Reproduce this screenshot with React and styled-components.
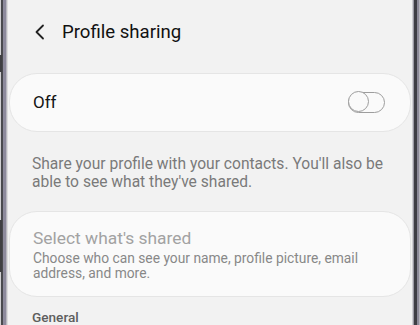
import React from 'react'
import styled, { createGlobalStyle } from 'styled-components'

const GlobalStyle = createGlobalStyle`
  html, body {
    margin: 0;
    padding: 0;
    background: #f2f2f2;
    font-family: Roboto, "Liberation Sans", sans-serif;
  }
`

const Phone = styled.div`
  display: flex;
  width: 420px;
  height: 325px;
  overflow: hidden;
`

const Bezel = styled.div`
  flex: 0 0 ${p => p.$w}px;
  background: ${p => p.$side === 'left'
    ? 'linear-gradient(90deg, #d0d0d2 0 1px, #4a4a4e 1px 3px, #8d8a9c 3px 6px, #b9b8c0 6px 7px, #dcdcdc 7px)'
    : 'linear-gradient(90deg, #cfcfd2 0 1px, #9b9aa4 1px 2px, #3e3e44 2px 5px, #8c8a98 5px 7px, #b4b3bb 7px)'};
  display: flex;
  flex-direction: column;
`

const SideKey = styled.div`
  margin-top: ${p => p.$top}px;
  height: ${p => p.$h}px;
  width: 2px;
  background: #3f3f42;
`

const Screen = styled.div`
  flex: 1;
  background: #f2f2f2;
  display: flex;
  flex-direction: column;
`

const Header = styled.header`
  display: flex;
  align-items: center;
  height: 68px;
  padding-left: 26px;
  gap: 16px;
  h1 {
    margin: 0;
    font-size: 18.6px;
    font-weight: 400;
    color: #111;
  }
`

const Card = styled.div`
  margin: ${p => p.$top}px 1px 0 1px;
  background: #fafafa;
  border: 1px solid #e5e5e5;
  border-radius: 28px;
  padding: ${p => p.$pad};
  display: flex;
  align-items: center;
  justify-content: space-between;
`

const CardText = styled.div`
  display: flex;
  flex-direction: column;
`

const Title = styled.span`
  font-size: ${p => (p.$dim ? '17.4px' : '17px')};
  line-height: 20px;
  color: ${p => (p.$dim ? '#a2a2a2' : '#141414')};
`

const Sub = styled.span`
  font-size: 13.8px;
  line-height: 15px;
  color: #888;
  margin-top: 3px;
`

const Toggle = styled.div`
  position: relative;
  width: 37px;
  height: 21px;
  box-sizing: border-box;
  border: 1.5px solid #9d9d9d;
  border-radius: 11px;
  margin-right: 25px;

  &::before {
    content: '';
    position: absolute;
    left: -1.5px;
    top: -1.5px;
    width: 21px;
    height: 21px;
    box-sizing: border-box;
    border-radius: 50%;
    border: 1.5px solid #9d9d9d;
    background: #fafafa;
  }
`

const Description = styled.p`
  margin: 23px 0 0 0;
  padding: 0 20px 0 24px;
  font-size: 15.6px;
  line-height: 18px;
  color: #7a7a7a;
`

const SectionLabel = styled.div`
  margin-top: 12px;
  padding-left: 24px;
  font-size: 13.6px;
  font-weight: 500;
  color: #5e5e5e;
`

const Chevron = () => (
  <svg width="12" height="16" viewBox="0 0 12 16" fill="none">
    <path d="M9 1.5 L2.5 8 L9 14.5" stroke="#222" strokeWidth="1.8" strokeLinecap="round" strokeLinejoin="round" />
  </svg>
)

export default function App() {
  return (
    <>
      <GlobalStyle />
      <Phone>
        <Bezel $w={8} $side="left">
          <SideKey $top={55} $h={17} />
          <SideKey $top={148} $h={52} />
        </Bezel>
        <Screen>
          <Header>
            <Chevron />
            <h1>Profile sharing</h1>
          </Header>
          <Card $top={8} $pad="0 0 0 23px" style={{ height: 60 }}>
            <Title>Off</Title>
            <Toggle />
          </Card>
          <Description>
            Share your profile with your contacts. You'll also be able to see what they've shared.
          </Description>
          <Card $top={20} $pad="16px 0 15px 23px">
            <CardText>
              <Title $dim>Select what's shared</Title>
              <Sub>Choose who can see your name, profile picture, email<br />address, and more.</Sub>
            </CardText>
          </Card>
          <SectionLabel>General</SectionLabel>
        </Screen>
        <Bezel $w={8} $side="right" />
      </Phone>
    </>
  )
}
